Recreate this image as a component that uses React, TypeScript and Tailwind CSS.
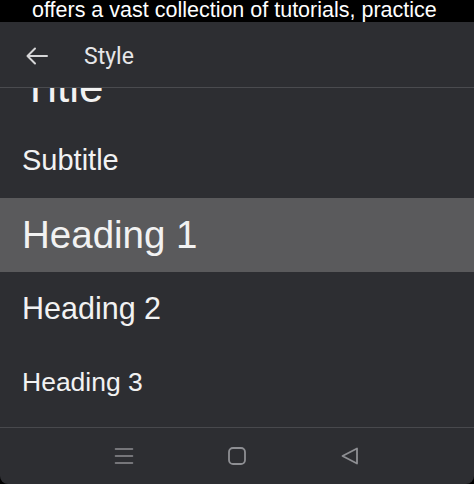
import React from "react";

const rows = [
  { label: "Title", size: "text-[44px]", active: false },
  { label: "Subtitle", size: "text-[29px]", active: false },
  { label: "Heading 1", size: "text-[38.5px]", active: true },
  { label: "Heading 2", size: "text-[30.5px]", active: false },
  { label: "Heading 3", size: "text-[26.5px]", active: false },
  { label: "Heading 4", size: "text-[24px]", active: false },
];

export default function App() {
  return (
    <div className="w-[474px] h-[484px] bg-black flex flex-col overflow-hidden">
      <div className="h-[22px] flex items-center pl-[32px] text-white text-[21.5px] leading-none whitespace-nowrap font-['Liberation_Sans',Arial,sans-serif] pb-[1px]">
        offers a vast collection of tutorials, practice
      </div>
      <div className="h-[65px] bg-[#2d2e32] flex items-center">
        <svg width="24" height="20" viewBox="0 0 24 20" className="ml-[25px] mt-[2px]" fill="none" stroke="#d6d6d8" strokeWidth="2" strokeLinecap="round" strokeLinejoin="round">
          <path d="M22 10H2.5M10 2.5L2.5 10L10 17.5" />
        </svg>
        <span className="ml-[35px] text-[23px] leading-none text-[#e6e6e8] font-['Roboto',sans-serif] mt-[3px]">Style</span>
      </div>
      <div className="h-px bg-[#4a4b4f]" />
      <div className="h-[339px] bg-[#2d2e32] overflow-hidden">
        <div className="-mt-[38px] flex flex-col">
          {rows.map((r) => (
            <div
              key={r.label}
              className={`h-[74px] shrink-0 flex items-center px-[22px] ${r.active ? "bg-[#5a5a5c]" : ""}`}
            >
              <span className={`${r.size} leading-normal text-[#f2f2f2] font-['Liberation_Sans',Arial,sans-serif]`}>
                {r.label}
              </span>
            </div>
          ))}
        </div>
      </div>
      <div className="h-px bg-[#48494d]" />
      <div className="h-[56px] bg-[#2d2e32] rounded-b-[8px] flex items-center">
        <svg width="20" height="18" viewBox="0 0 20 18" className="ml-[114px]" fill="none" stroke="#8e8f93" strokeWidth="1.6" strokeLinecap="round">
          <path d="M1.5 2H18.5M1.5 9H18.5M1.5 16H18.5" />
        </svg>
        <svg width="20" height="20" viewBox="0 0 20 20" className="ml-[93px]" fill="none" stroke="#8e8f93" strokeWidth="1.8">
          <rect x="2" y="2" width="16" height="16" rx="4" />
        </svg>
        <svg width="20" height="20" viewBox="0 0 20 20" className="ml-[93px]" fill="none" stroke="#8e8f93" strokeWidth="1.8" strokeLinejoin="round">
          <path d="M17 2.5V17.5L2.5 10Z" />
        </svg>
      </div>
    </div>
  );
}
